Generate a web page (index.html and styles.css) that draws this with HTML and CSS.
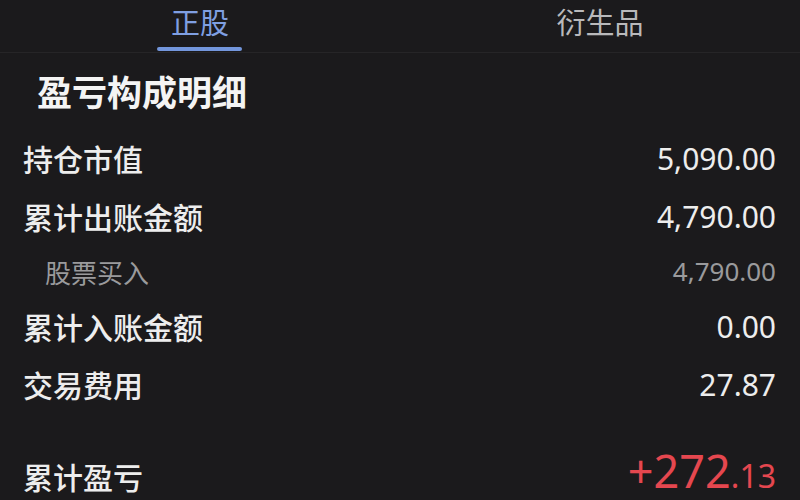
FILE: index.html
```html
<!DOCTYPE html>
<html lang="zh-CN">
<head>
<meta charset="utf-8">
<link rel="stylesheet" href="styles.css">
</head>
<body>
<div class="page">
  <div class="tabs">
    <div class="tab active"><span class="tab-label">正股</span></div>
    <div class="tab"><span class="tab-label">衍生品</span></div>
  </div>
  <h1 class="title">盈亏构成明细</h1>
  <div class="list">
    <div class="row"><span class="label">持仓市值</span><span class="value">5,090.00</span></div>
    <div class="row"><span class="label">累计出账金额</span><span class="value">4,790.00</span></div>
    <div class="row sub"><span class="label">股票买入</span><span class="value">4,790.00</span></div>
    <div class="row"><span class="label">累计入账金额</span><span class="value">0.00</span></div>
    <div class="row"><span class="label">交易费用</span><span class="value">27.87</span></div>
    <div class="row total"><span class="label">累计盈亏</span><span class="value profit">+272<span class="dec">.13</span></span></div>
  </div>
</div>
</body>
</html>
```
FILE: styles.css
```css
html, body {
  margin: 0;
  padding: 0;
  background: #1b1a1c;
}
body {
  width: 800px;
  height: 500px;
  overflow: hidden;
  font-family: "Noto Sans", "Noto Sans CJK SC", sans-serif;
  color: #ececec;
}
.page {
  display: flex;
  flex-direction: column;
}
.tabs {
  display: flex;
  height: 52px;
  border-bottom: 1px solid #262527;
}
.tab {
  flex: 1;
  display: flex;
  justify-content: center;
  font-family: "Noto Sans CJK SC", sans-serif;
  font-size: 29px;
  color: #b9b9bb;
}
.tab-label {
  line-height: 42px;
  height: 52px;
  box-sizing: border-box;
}
.tab.active .tab-label {
  color: #7f9fe2;
  position: relative;
}
.tab.active .tab-label::after {
  content: "";
  position: absolute;
  left: -14px;
  right: -13px;
  bottom: 1px;
  height: 4px;
  border-radius: 2px;
  background: #7396dc;
}
.title {
  margin: 18px 0 0 37px;
  height: 40px;
  line-height: 40px;
  font-family: "Noto Sans CJK SC", sans-serif;
  font-size: 35px;
  font-weight: 700;
  color: #f4f4f4;
}
.list {
  margin-top: 18px;
  display: flex;
  flex-direction: column;
  padding: 0 24px 0 23px;
}
.row {
  height: 58px;
  display: flex;
  align-items: center;
  justify-content: space-between;
}
.label {
  font-family: "Noto Sans CJK SC", sans-serif;
  font-size: 30px;
  font-weight: 500;
  color: #ededed;
}
.value {
  font-family: "Noto Sans", sans-serif;
  font-size: 30px;
  color: #ededed;
}
.row.sub {
  height: 52px;
}
.row.sub .label {
  font-size: 26px;
  font-weight: 400;
  color: #9a9a9c;
  padding-left: 22px;
}
.row.sub .value {
  font-size: 26px;
  color: #9a9a9c;
}
.row.total {
  margin-top: 40px;
  height: 40px;
  align-items: flex-end;
}
.row.total .label {
  line-height: 34px;
}
.profit {
  color: #e5474f;
  font-size: 45px;
  line-height: 34px;
}
.dec {
  font-size: 32px;
}
```
